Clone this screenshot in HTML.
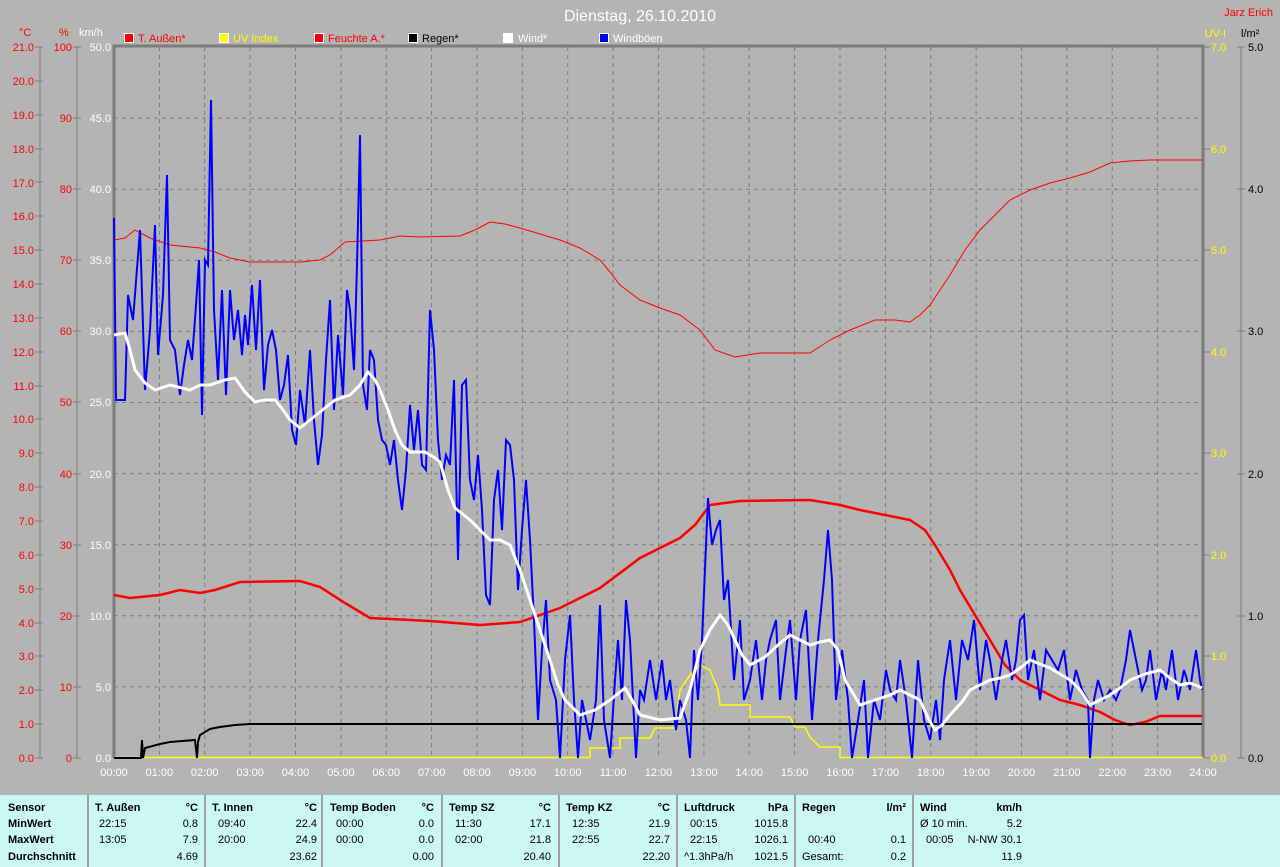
<!DOCTYPE html>
<html><head><meta charset="utf-8"><style>
body{margin:0;width:1280px;height:867px;background:#b4b4b4;overflow:hidden;font-family:"Liberation Sans",sans-serif}
svg{position:absolute;left:0;top:0}
.tbl{position:absolute;left:0;top:795px;width:1280px;height:72px;background:#ccf8f4;font-size:11px;color:#000}
.tbl div{position:absolute;white-space:nowrap}
.b{font-weight:bold}
.v{position:absolute;top:0;width:2px;height:72px;background:#a0a0a0}
</style></head><body>
<svg width="1280" height="795" font-family="Liberation Sans, sans-serif" font-size="11">
<g stroke="#7c7c7c" stroke-dasharray="4,4" stroke-width="1">
<line x1="159.4" y1="47" x2="159.4" y2="758"/><line x1="204.7" y1="47" x2="204.7" y2="758"/><line x1="250.1" y1="47" x2="250.1" y2="758"/><line x1="295.5" y1="47" x2="295.5" y2="758"/><line x1="340.9" y1="47" x2="340.9" y2="758"/><line x1="386.2" y1="47" x2="386.2" y2="758"/><line x1="431.6" y1="47" x2="431.6" y2="758"/><line x1="477" y1="47" x2="477" y2="758"/><line x1="522.4" y1="47" x2="522.4" y2="758"/><line x1="567.7" y1="47" x2="567.7" y2="758"/><line x1="613.1" y1="47" x2="613.1" y2="758"/><line x1="658.5" y1="47" x2="658.5" y2="758"/><line x1="703.9" y1="47" x2="703.9" y2="758"/><line x1="749.2" y1="47" x2="749.2" y2="758"/><line x1="794.6" y1="47" x2="794.6" y2="758"/><line x1="840" y1="47" x2="840" y2="758"/><line x1="885.4" y1="47" x2="885.4" y2="758"/><line x1="930.7" y1="47" x2="930.7" y2="758"/><line x1="976.1" y1="47" x2="976.1" y2="758"/><line x1="1021.5" y1="47" x2="1021.5" y2="758"/><line x1="1066.9" y1="47" x2="1066.9" y2="758"/><line x1="1112.2" y1="47" x2="1112.2" y2="758"/><line x1="1157.6" y1="47" x2="1157.6" y2="758"/>
<line x1="114" y1="118.1" x2="1203" y2="118.1"/><line x1="114" y1="189.2" x2="1203" y2="189.2"/><line x1="114" y1="260.3" x2="1203" y2="260.3"/><line x1="114" y1="331.4" x2="1203" y2="331.4"/><line x1="114" y1="402.5" x2="1203" y2="402.5"/><line x1="114" y1="473.6" x2="1203" y2="473.6"/><line x1="114" y1="544.7" x2="1203" y2="544.7"/><line x1="114" y1="615.8" x2="1203" y2="615.8"/><line x1="114" y1="686.9" x2="1203" y2="686.9"/>
</g>
<g stroke="#7c7c7c" stroke-width="3" fill="none"><path d="M114,758V46H1203V758"/></g>
<!-- left axes -->
<g stroke="#7c7c7c" stroke-width="1">
<line x1="40" y1="47" x2="40" y2="758"/><line x1="77" y1="47" x2="77" y2="758"/>
<line x1="1241" y1="47" x2="1241" y2="758"/>
</g>
<g id="ct" fill="#f00" text-anchor="end">
<text x="34" y="51">21.0</text><text x="34" y="85">20.0</text><text x="34" y="119">19.0</text><text x="34" y="153">18.0</text><text x="34" y="187">17.0</text><text x="34" y="220">16.0</text><text x="34" y="254">15.0</text><text x="34" y="288">14.0</text><text x="34" y="322">13.0</text><text x="34" y="356">12.0</text><text x="34" y="390">11.0</text><text x="34" y="423">10.0</text><text x="34" y="457">9.0</text><text x="34" y="491">8.0</text><text x="34" y="525">7.0</text><text x="34" y="559">6.0</text><text x="34" y="593">5.0</text><text x="34" y="627">4.0</text><text x="34" y="660">3.0</text><text x="34" y="694">2.0</text><text x="34" y="728">1.0</text><text x="34" y="762">0.0</text>
<text x="72" y="51">100</text><text x="72" y="122">90</text><text x="72" y="193">80</text><text x="72" y="264">70</text><text x="72" y="335">60</text><text x="72" y="406">50</text><text x="72" y="478">40</text><text x="72" y="549">30</text><text x="72" y="620">20</text><text x="72" y="691">10</text><text x="72" y="762">0</text>
</g>
<g stroke="#7c7c7c"><path d="M35,47h8M35,81h8M35,115h8M35,149h8M35,182h8M35,216h8M35,250h8M35,284h8M35,318h8M35,352h8M35,386h8M35,419h8M35,453h8M35,487h8M35,521h8M35,555h8M35,589h8M35,623h8M35,656h8M35,690h8M35,724h8M35,758h8M73,47h8M73,118h8M73,189h8M73,260h8M73,331h8M73,402h8M73,474h8M73,545h8M73,616h8M73,687h8M73,758h8M1204,47h6M1204,149h6M1204,250h6M1204,352h6M1204,453h6M1204,555h6M1204,656h6M1204,758h6M1237,47h8M1237,189h8M1237,331h8M1237,474h8M1237,616h8M1237,758h8"/></g>
<g fill="#fff" text-anchor="end">
<text x="111" y="51">50.0</text><text x="111" y="122">45.0</text><text x="111" y="193">40.0</text><text x="111" y="264">35.0</text><text x="111" y="335">30.0</text><text x="111" y="406">25.0</text><text x="111" y="478">20.0</text><text x="111" y="549">15.0</text><text x="111" y="620">10.0</text><text x="111" y="691">5.0</text><text x="111" y="762">0.0</text>
</g>
<g fill="#ff0"><text x="1211" y="51">7.0</text><text x="1211" y="153">6.0</text><text x="1211" y="254">5.0</text><text x="1211" y="356">4.0</text><text x="1211" y="457">3.0</text><text x="1211" y="559">2.0</text><text x="1211" y="660">1.0</text><text x="1211" y="762">0.0</text></g>
<g fill="#000"><text x="1248" y="51">5.0</text><text x="1248" y="193">4.0</text><text x="1248" y="335">3.0</text><text x="1248" y="478">2.0</text><text x="1248" y="620">1.0</text><text x="1248" y="762">0.0</text></g>
<!-- time labels -->
<g fill="#fff" text-anchor="middle">
<text x="114" y="776">00:00</text><text x="159.4" y="776">01:00</text><text x="204.7" y="776">02:00</text><text x="250.1" y="776">03:00</text><text x="295.5" y="776">04:00</text><text x="340.9" y="776">05:00</text><text x="386.2" y="776">06:00</text><text x="431.6" y="776">07:00</text><text x="477" y="776">08:00</text><text x="522.4" y="776">09:00</text><text x="567.7" y="776">10:00</text><text x="613.1" y="776">11:00</text><text x="658.5" y="776">12:00</text><text x="703.9" y="776">13:00</text><text x="749.2" y="776">14:00</text><text x="794.6" y="776">15:00</text><text x="840" y="776">16:00</text><text x="885.4" y="776">17:00</text><text x="930.7" y="776">18:00</text><text x="976.1" y="776">19:00</text><text x="1021.5" y="776">20:00</text><text x="1066.9" y="776">21:00</text><text x="1112.2" y="776">22:00</text><text x="1157.6" y="776">23:00</text><text x="1203" y="776">24:00</text>
</g>
<!-- header -->
<text x="640" y="21" fill="#fff" font-size="16" text-anchor="middle">Dienstag, 26.10.2010</text>
<text x="1273" y="16" fill="#f00" text-anchor="end">Jarz Erich</text>
<text x="1226" y="37" fill="#ff0" text-anchor="end">UV-I</text>
<text x="1241" y="37" fill="#000">l/m²</text>
<text x="19" y="36" fill="#f00">°C</text><text x="59" y="36" fill="#f00">%</text><text x="79" y="36" fill="#fff">km/h</text>
<g stroke="#fff" stroke-width="1">
<rect x="124.5" y="33.5" width="9" height="9" fill="#f00"/><rect x="219.5" y="33.5" width="9" height="9" fill="#ff0"/><rect x="314.5" y="33.5" width="9" height="9" fill="#f00"/><rect x="408.5" y="33.5" width="9" height="9" fill="#000"/><rect x="503.5" y="33.5" width="9" height="9" fill="#fff"/><rect x="599.5" y="33.5" width="9" height="9" fill="#00f"/>
</g>
<text x="138" y="42" fill="#f00">T. Außen*</text><text x="233" y="42" fill="#ff0">UV Index</text><text x="328" y="42" fill="#f00">Feuchte A.*</text><text x="422" y="42" fill="#000">Regen*</text><text x="518" y="42" fill="#fff">Wind*</text><text x="613" y="42" fill="#fff">Windböen</text>
<!-- data -->
<polyline fill="none" stroke="#f00" stroke-width="1" points="114,240 125,238 135,230 150,238 170,245 200,248 215,252 230,258 250,262 300,262 320,260 330,255 345,242 380,240 400,236 420,237 460,236 475,230 490,222 505,224 520,228 540,234 560,240 580,248 600,260 610,272 620,285 640,300 660,308 680,315 700,330 715,350 735,357 760,353 810,353 830,340 850,330 875,320 895,320 910,322 920,315 930,305 950,275 965,250 980,230 1000,210 1010,200 1030,190 1050,183 1070,178 1090,172 1110,163 1130,161 1150,160 1202,160"/>
<polyline fill="none" stroke="#f00" stroke-width="2.5" points="114,595 130,598 160,595 180,590 200,593 215,590 240,582 300,581 320,587 345,603 370,618 430,621 480,625 520,622 560,608 600,588 640,558 680,538 695,525 710,505 740,501 810,500 840,505 860,510 910,520 925,530 935,545 950,570 960,590 975,615 990,640 1005,665 1020,680 1040,690 1060,700 1080,705 1100,712 1115,720 1130,725 1145,722 1160,716 1202,716"/>
<polyline fill="none" stroke="#ff0" stroke-width="1.5" points="114,757.5 590,757.5 590,748 620,748 620,738 650,738 655,728 675,728 680,690 690,675 700,665 710,670 718,690 720,705 750,705 750,717 790,717 795,727 805,727 810,737 820,747 840,747 840,757.5 1203,757.5"/>
<polyline fill="none" stroke="#000" stroke-width="2" points="114,758 141,758 142,740 143,758 145,748 160,744 170,742 195,740 197,758 198,742 200,735 210,729 220,727 235,725 250,724 1202,724"/>
<polyline fill="none" stroke="#00f" stroke-width="2" points="114,218 116,400 125,400 128,295 133,320 140,230 145,390 150,330 155,225 158,355 163,295 167,175 170,340 175,350 180,395 184,365 188,340 192,360 196,305 199,260 202,415 205,260 208,265 211,100 214,310 218,380 222,290 226,395 230,290 234,340 238,310 242,355 245,315 248,345 252,285 256,350 260,280 264,390 268,345 272,330 276,350 280,400 284,385 288,355 292,430 296,445 300,390 305,425 310,350 314,420 318,465 322,435 326,360 330,300 334,410 338,335 343,395 347,290 350,310 354,370 357,265 360,135 363,385 367,410 370,350 374,360 378,420 382,440 386,445 390,465 394,440 398,480 402,510 406,470 410,405 414,450 418,410 422,465 426,470 430,310 434,350 438,440 442,480 446,455 450,465 454,380 458,560 462,385 466,380 470,480 474,500 478,455 482,510 486,595 490,605 494,500 498,470 502,530 506,440 510,445 514,480 518,590 522,530 526,480 530,540 534,620 538,720 542,650 546,600 550,680 556,700 560,758 565,660 570,615 574,700 578,758 582,700 590,740 596,700 600,605 604,720 610,758 615,680 618,640 622,700 626,600 630,640 636,758 640,690 644,700 650,660 656,700 662,660 666,700 670,680 676,730 680,700 686,720 690,758 694,650 698,700 702,640 708,498 712,545 716,530 720,520 724,600 728,580 734,680 740,620 744,700 750,680 756,640 762,700 766,660 770,640 776,620 780,700 786,650 790,620 796,700 800,640 806,610 812,720 818,640 824,580 828,530 832,580 836,700 842,650 848,700 852,758 858,720 864,680 868,758 874,700 880,720 886,670 890,690 896,700 900,660 906,700 912,758 918,660 924,720 930,740 936,700 940,740 944,680 950,640 956,700 962,640 968,660 974,620 980,690 986,640 990,660 996,700 1002,660 1006,640 1012,680 1016,660 1020,620 1024,615 1028,680 1034,650 1040,700 1046,650 1052,660 1058,670 1064,650 1070,700 1076,670 1082,690 1088,700 1090,758 1094,700 1098,680 1104,700 1110,690 1116,700 1120,690 1126,660 1130,630 1136,660 1142,690 1146,680 1150,650 1156,700 1162,670 1166,690 1172,650 1178,700 1184,670 1190,690 1196,650 1200,680 1202,690"/>
<polyline fill="none" stroke="#fff" stroke-width="3" points="114,335 125,333 130,350 135,370 145,383 155,390 170,385 190,390 200,385 210,385 225,380 235,378 245,392 255,402 265,400 275,400 283,410 290,420 300,428 310,420 320,412 335,400 350,395 360,385 368,372 375,380 380,390 388,410 395,430 402,445 410,452 425,452 435,458 440,462 448,490 455,508 470,520 480,530 490,540 500,540 510,545 520,570 530,600 540,630 550,660 558,685 565,700 580,715 595,710 610,700 625,688 632,700 640,715 660,720 680,718 690,690 700,650 710,630 720,615 728,625 735,640 742,655 750,665 765,657 778,645 790,635 800,640 810,645 820,642 830,640 838,650 845,680 860,705 875,700 890,695 900,690 910,695 920,700 928,718 935,730 942,725 950,715 962,702 970,690 980,685 990,680 1000,678 1010,675 1020,668 1030,660 1040,664 1050,668 1060,674 1070,680 1080,690 1090,705 1100,700 1110,695 1120,688 1130,680 1145,674 1160,670 1170,678 1180,685 1190,683 1202,688"/>
</svg>
<div class="tbl">
<div class="v" style="left:87px"></div><div class="v" style="left:204px"></div><div class="v" style="left:321px"></div><div class="v" style="left:441px"></div><div class="v" style="left:558px"></div><div class="v" style="left:676px"></div><div class="v" style="left:794px"></div><div class="v" style="left:912px"></div>
<div class="b" style="left:8px;top:7px">Sensor</div><div class="b" style="left:8px;top:23px">MinWert</div><div class="b" style="left:8px;top:39px">MaxWert</div><div class="b" style="left:8px;top:56px">Durchschnitt</div>
<div class="b" style="left:95px;top:7px">T. Außen</div><div class="b" style="right:1082px;top:7px">°C</div>
<div style="left:99px;top:23px">22:15</div><div style="right:1082px;top:23px">0.8</div><div style="left:99px;top:39px">13:05</div><div style="right:1082px;top:39px">7.9</div><div style="right:1082px;top:56px">4.69</div>
<div class="b" style="left:212px;top:7px">T. Innen</div><div class="b" style="right:963px;top:7px">°C</div>
<div style="left:218px;top:23px">09:40</div><div style="right:963px;top:23px">22.4</div><div style="left:218px;top:39px">20:00</div><div style="right:963px;top:39px">24.9</div><div style="right:963px;top:56px">23.62</div>
<div class="b" style="left:330px;top:7px">Temp Boden</div><div class="b" style="right:846px;top:7px">°C</div>
<div style="left:336px;top:23px">00:00</div><div style="right:846px;top:23px">0.0</div><div style="left:336px;top:39px">00:00</div><div style="right:846px;top:39px">0.0</div><div style="right:846px;top:56px">0.00</div>
<div class="b" style="left:449px;top:7px">Temp SZ</div><div class="b" style="right:729px;top:7px">°C</div>
<div style="left:455px;top:23px">11:30</div><div style="right:729px;top:23px">17.1</div><div style="left:455px;top:39px">02:00</div><div style="right:729px;top:39px">21.8</div><div style="right:729px;top:56px">20.40</div>
<div class="b" style="left:566px;top:7px">Temp KZ</div><div class="b" style="right:610px;top:7px">°C</div>
<div style="left:572px;top:23px">12:35</div><div style="right:610px;top:23px">21.9</div><div style="left:572px;top:39px">22:55</div><div style="right:610px;top:39px">22.7</div><div style="right:610px;top:56px">22.20</div>
<div class="b" style="left:684px;top:7px">Luftdruck</div><div class="b" style="right:492px;top:7px">hPa</div>
<div style="left:690px;top:23px">00:15</div><div style="right:492px;top:23px">1015.8</div><div style="left:690px;top:39px">22:15</div><div style="right:492px;top:39px">1026.1</div><div style="left:684px;top:56px">^1.3hPa/h</div><div style="right:492px;top:56px">1021.5</div>
<div class="b" style="left:802px;top:7px">Regen</div><div class="b" style="right:374px;top:7px">l/m²</div>
<div style="left:808px;top:39px">00:40</div><div style="right:374px;top:39px">0.1</div><div style="left:802px;top:56px">Gesamt:</div><div style="right:374px;top:56px">0.2</div>
<div class="b" style="left:920px;top:7px">Wind</div><div class="b" style="right:258px;top:7px">km/h</div>
<div style="left:920px;top:23px">Ø 10 min.</div><div style="right:258px;top:23px">5.2</div><div style="left:926px;top:39px">00:05</div><div style="right:258px;top:39px">N-NW 30.1</div><div style="right:258px;top:56px">11.9</div>
</div>
</body></html>
